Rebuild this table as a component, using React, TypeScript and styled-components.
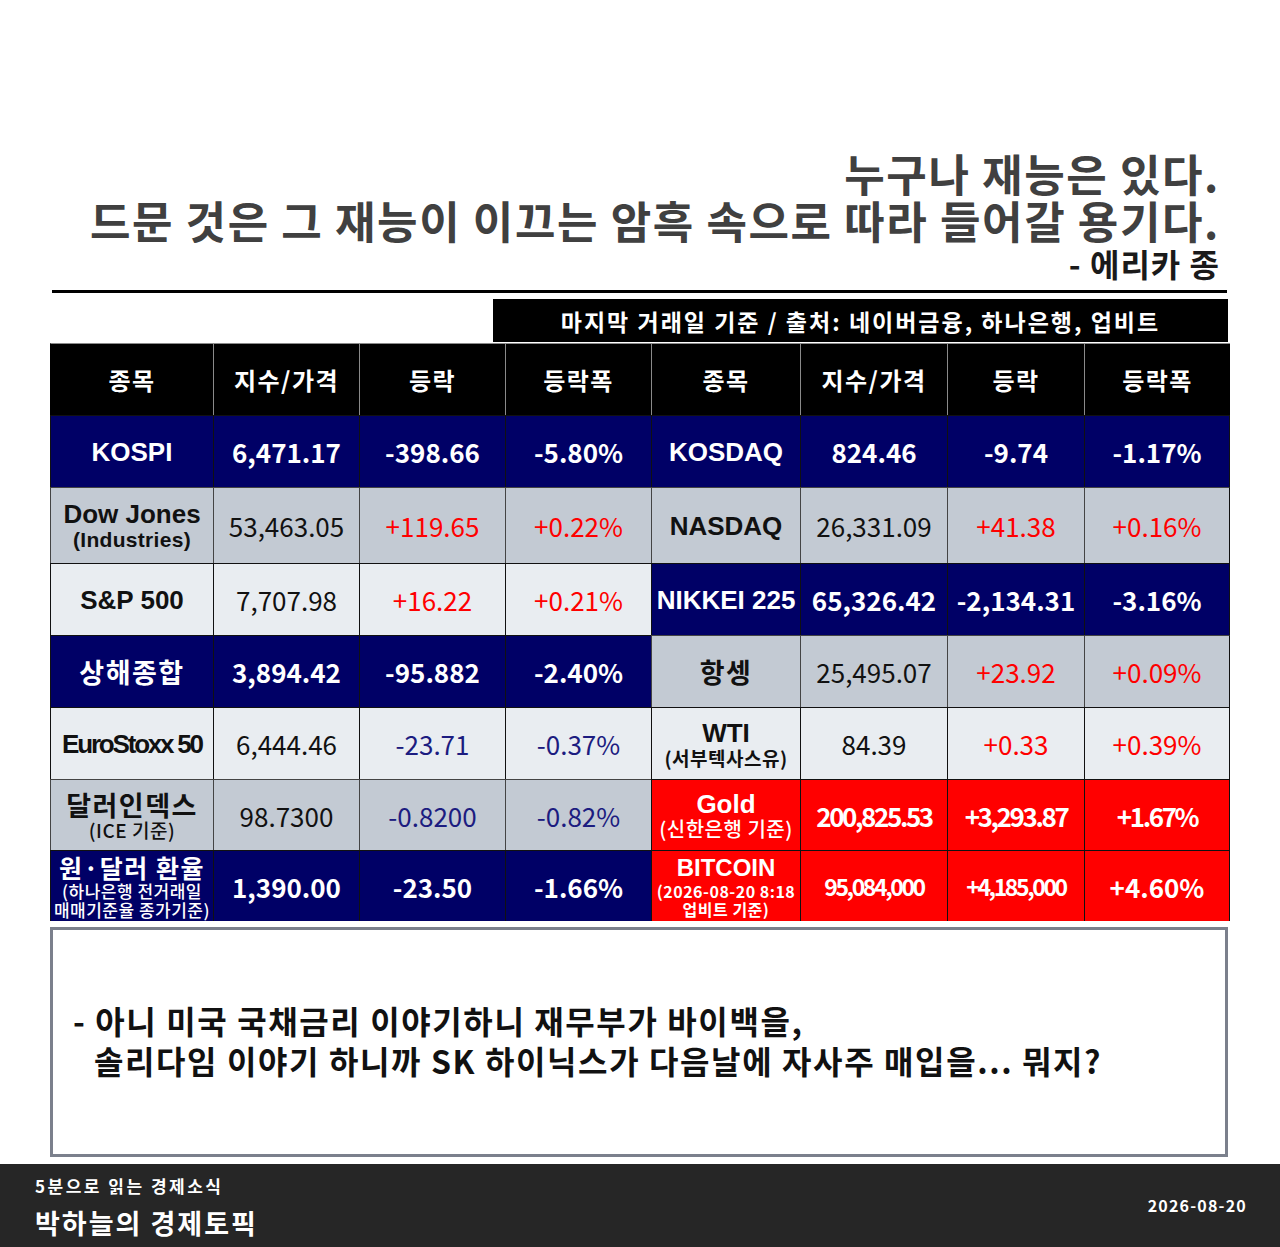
import { Fragment } from 'react';
import styled, { createGlobalStyle, css } from 'styled-components';

const GlobalStyle = createGlobalStyle`
  html, body {
    margin: 0;
    padding: 0;
    background: #ffffff;
  }
  body {
    font-family: 'Noto Sans CJK KR', 'Noto Sans', sans-serif;
  }
`;

type Tone = 'navy' | 'gray' | 'light' | 'red';
type Ink = 'white' | 'black' | 'red' | 'blue';

interface Market {
  name: string;
  latin?: boolean;
  nameSize?: number;
  sub?: string[];
  subBold?: boolean;
  subLatin?: boolean;
  subSize?: number;
  value: string;
  change: string;
  pct: string;
  tone: Tone;
  ink: Ink;
  narrow?: boolean;
  small?: boolean;
  nameTight?: boolean;
}

const rows: [Market, Market][] = [
  [
    { name: 'KOSPI', latin: true, value: '6,471.17', change: '-398.66', pct: '-5.80%', tone: 'navy', ink: 'white' },
    { name: 'KOSDAQ', latin: true, value: '824.46', change: '-9.74', pct: '-1.17%', tone: 'navy', ink: 'white' },
  ],
  [
    { name: 'Dow Jones', latin: true, sub: ['(Industries)'], subBold: true, subLatin: true, subSize: 21, value: '53,463.05', change: '+119.65', pct: '+0.22%', tone: 'gray', ink: 'red' },
    { name: 'NASDAQ', latin: true, value: '26,331.09', change: '+41.38', pct: '+0.16%', tone: 'gray', ink: 'red' },
  ],
  [
    { name: 'S&P 500', latin: true, value: '7,707.98', change: '+16.22', pct: '+0.21%', tone: 'light', ink: 'red' },
    { name: 'NIKKEI 225', latin: true, value: '65,326.42', change: '-2,134.31', pct: '-3.16%', tone: 'navy', ink: 'white' },
  ],
  [
    { name: '상해종합', value: '3,894.42', change: '-95.882', pct: '-2.40%', tone: 'navy', ink: 'white' },
    { name: '항셍', value: '25,495.07', change: '+23.92', pct: '+0.09%', tone: 'gray', ink: 'red' },
  ],
  [
    { name: 'EuroStoxx 50', latin: true, nameTight: true, value: '6,444.46', change: '-23.71', pct: '-0.37%', tone: 'light', ink: 'blue' },
    { name: 'WTI', latin: true, sub: ['(서부텍사스유)'], subBold: true, subSize: 19, value: '84.39', change: '+0.33', pct: '+0.39%', tone: 'light', ink: 'red' },
  ],
  [
    { name: '달러인덱스', sub: ['(ICE 기준)'], subSize: 19, value: '98.7300', change: '-0.8200', pct: '-0.82%', tone: 'gray', ink: 'blue' },
    { name: 'Gold', latin: true, sub: ['(신한은행 기준)'], subSize: 20, value: '200,825.53', change: '+3,293.87', pct: '+1.67%', tone: 'red', ink: 'white', narrow: true },
  ],
  [
    { name: '원·달러 환율', nameSize: 25, sub: ['(하나은행 전거래일', '매매기준율 종가기준)'], subSize: 17, value: '1,390.00', change: '-23.50', pct: '-1.66%', tone: 'navy', ink: 'white' },
    { name: 'BITCOIN', latin: true, nameSize: 24, sub: ['(2026-08-20 8:18', '업비트 기준)'], subBold: true, subSize: 16, value: '95,084,000', change: '+4,185,000', pct: '+4.60%', tone: 'red', ink: 'white', narrow: true, small: true },
  ],
];

const heads = ['종목', '지수/가격', '등락', '등락폭', '종목', '지수/가격', '등락', '등락폭'];
const rowHeights = [72, 76, 72, 72, 72, 71, 71];

const toneBg: Record<Tone, string> = {
  navy: '#000066',
  gray: '#c3cad3',
  light: '#e9edf1',
  red: '#ff0000',
};

const inkColor: Record<Ink, string> = {
  white: '#ffffff',
  black: '#111111',
  red: '#ff0000',
  blue: '#1c1c80',
};

const Page = styled.div`
  width: 1280px;
  height: 1247px;
  display: flex;
  flex-direction: column;
  overflow: hidden;
`;

const Main = styled.main`
  flex: 1;
  display: flex;
  flex-direction: column;
  padding: 150px 50px 0 50px;
`;

const Quote = styled.section`
  display: flex;
  flex-direction: column;
  align-items: flex-end;
  padding-right: 10px;
  color: #404040;
  font-weight: 700;

  .line {
    font-size: 44px;
    line-height: 47px;
    letter-spacing: 1.6px;
    white-space: nowrap;
  }

  .author {
    font-size: 32px;
    line-height: 42px;
    letter-spacing: 1px;
    color: #1a1a1a;
    margin-top: -2px;
  }
`;

const Rule = styled.hr`
  width: 1175px;
  margin: 6px 0 0 2px;
  border: none;
  border-top: 3px solid #000;
`;

const SourceBar = styled.div`
  align-self: flex-end;
  width: 735px;
  height: 43px;
  margin: 6px 2px 1px 0;
  background: #000;
  color: #fff;
  display: flex;
  align-items: center;
  justify-content: center;
  font-size: 23px;
  font-weight: 700;
  letter-spacing: 2px;
`;

const Grid = styled.div<{ $rows: string }>`
  display: grid;
  grid-template-columns: 163px 146px 146px 146px 149px 147px 137px 146px;
  grid-template-rows: 72px ${(p) => p.$rows};
  width: 1180px;
`;

const HeadCell = styled.div<{ $first?: boolean }>`
  background: #000;
  color: #fff;
  display: flex;
  align-items: center;
  justify-content: center;
  font-size: 24px;
  font-weight: 700;
  letter-spacing: 1.5px;
  border-left: 1px solid ${(p) => (p.$first ? '#000' : '#8a8a8a')};
  border-top: 1px solid #8a8a8a;
`;

const Cell = styled.div<{ $tone: Tone; $last?: boolean }>`
  background: ${(p) => toneBg[p.$tone]};
  display: flex;
  flex-direction: column;
  align-items: center;
  justify-content: center;
  border-left: 1.5px solid ${(p) => (p.$tone === 'gray' ? '#444' : '#111')};
  border-top: 1.5px solid ${(p) => (p.$tone === 'gray' ? '#444' : '#111')};
  ${(p) =>
    p.$last &&
    css`
      border-right: 1.5px solid #111;
    `}
  overflow: hidden;
  box-sizing: border-box;
`;

const Name = styled.div<{ $latin?: boolean; $dark: boolean; $tight?: boolean; $hasSub: boolean; $size?: number }>`
  font-family: ${(p) =>
    p.$latin ? "'Liberation Sans', Arial, sans-serif" : "'Noto Sans CJK KR', sans-serif"};
  font-weight: 700;
  font-size: ${(p) => (p.$size ? `${p.$size}px` : p.$latin ? '26px' : '27px')};
  line-height: ${(p) => (p.$hasSub ? '28px' : '32px')};
  letter-spacing: ${(p) => (p.$latin ? '0' : '1.5px')};
  color: ${(p) => (p.$dark ? '#111' : '#fff')};
  white-space: nowrap;
  ${(p) =>
    p.$tight &&
    css`
      letter-spacing: -2.2px;
    `}
`;

const Sub = styled.div<{ $bold?: boolean; $size: number; $dark: boolean; $latin?: boolean }>`
  font-family: ${(p) =>
    p.$latin ? "'Liberation Sans', Arial, sans-serif" : "'Noto Sans CJK KR', sans-serif"};
  font-weight: ${(p) => (p.$bold ? 700 : 500)};
  font-size: ${(p) => p.$size}px;
  line-height: ${(p) => p.$size + 2}px;
  color: ${(p) => (p.$dark ? '#111' : '#fff')};
  white-space: nowrap;
  letter-spacing: ${(p) => (p.$latin ? '0.3px' : '0.5px')};
`;

const Value = styled.div<{ $ink: Ink; $bold: boolean; $narrow?: boolean; $small?: boolean }>`
  font-family: 'Noto Sans CJK KR', 'Noto Sans', sans-serif;
  font-size: ${(p) => (p.$small ? '23px' : '26px')};
  font-weight: ${(p) => (p.$bold ? 700 : 400)};
  color: ${(p) => inkColor[p.$ink]};
  white-space: nowrap;
  ${(p) =>
    p.$narrow &&
    css`
      letter-spacing: -2.4px;
    `}
`;

const Memo = styled.section`
  margin: 6px 0 0 0;
  width: 1178px;
  height: 230px;
  box-sizing: border-box;
  border: 3px solid #7b808c;
  display: flex;
  flex-direction: column;
  justify-content: center;
  padding: 0 0 4px 20px;
  font-size: 32px;
  font-weight: 700;
  line-height: 40px;
  letter-spacing: 1.6px;
  color: #111;
`;

const MemoLine = styled.p<{ $indent?: boolean }>`
  margin: 0;
  white-space: nowrap;
  padding-left: ${(p) => (p.$indent ? '21px' : '0')};
`;

const Footer = styled.footer`
  height: 83px;
  background: #262626;
  color: #fff;
  display: flex;
  justify-content: space-between;
  align-items: center;
  padding: 0 33px 0 35px;

  .brand {
    display: flex;
    flex-direction: column;
    gap: 9px;
    margin-top: 4px;
  }
  .tagline {
    font-size: 17px;
    font-weight: 700;
    line-height: 22px;
    letter-spacing: 2.5px;
  }
  .title {
    font-size: 27px;
    font-weight: 700;
    line-height: 34px;
    letter-spacing: 2px;
  }
  .date {
    font-size: 16px;
    font-weight: 700;
    letter-spacing: 1.2px;
    margin-top: -2px;
  }
`;

const MarketCells = ({ m, right }: { m: Market; right: boolean }) => {
  const dark = m.tone === 'gray' || m.tone === 'light';
  const bold = m.tone === 'navy' || m.tone === 'red';
  const valueInk: Ink = bold ? 'white' : 'black';
  return (
    <>
      <Cell $tone={m.tone}>
        <Name $latin={m.latin} $dark={dark} $tight={m.nameTight} $hasSub={!!m.sub} $size={m.nameSize}>
          {m.name}
        </Name>
        {m.sub?.map((s) => (
          <Sub key={s} $bold={m.subBold} $size={m.subSize ?? 18} $dark={dark} $latin={m.subLatin}>
            {s}
          </Sub>
        ))}
      </Cell>
      <Cell $tone={m.tone}>
        <Value $ink={valueInk} $bold={bold} $narrow={m.narrow} $small={m.small}>
          {m.value}
        </Value>
      </Cell>
      <Cell $tone={m.tone}>
        <Value $ink={m.ink} $bold={bold} $narrow={m.narrow} $small={m.small}>
          {m.change}
        </Value>
      </Cell>
      <Cell $tone={m.tone} $last={right}>
        <Value $ink={m.ink} $bold={bold} $narrow={m.narrow && !m.small}>
          {m.pct}
        </Value>
      </Cell>
    </>
  );
};

const App = () => {
  return (
    <Page>
      <GlobalStyle />
      <Main>
        <Quote>
          <span className="line">누구나 재능은 있다.</span>
          <span className="line">드문 것은 그 재능이 이끄는 암흑 속으로 따라 들어갈 용기다.</span>
          <span className="author">- 에리카 종</span>
        </Quote>
        <Rule />
        <SourceBar>마지막 거래일 기준 / 출처: 네이버금융, 하나은행, 업비트</SourceBar>
        <Grid $rows={rowHeights.map((h) => `${h}px`).join(' ')}>
          {heads.map((h, i) => (
            <HeadCell key={i} $first={i === 0}>
              {h}
            </HeadCell>
          ))}
          {rows.map(([l, r]) => (
            <Fragment key={l.name}>
              <MarketCells m={l} right={false} />
              <MarketCells m={r} right />
            </Fragment>
          ))}
        </Grid>
        <Memo>
          <MemoLine>- 아니 미국 국채금리 이야기하니 재무부가 바이백을,</MemoLine>
          <MemoLine $indent>솔리다임 이야기 하니까 SK 하이닉스가 다음날에 자사주 매입을... 뭐지?</MemoLine>
        </Memo>
      </Main>
      <Footer>
        <div className="brand">
          <span className="tagline">5분으로 읽는 경제소식</span>
          <span className="title">박하늘의 경제토픽</span>
        </div>
        <span className="date">2026-08-20</span>
      </Footer>
    </Page>
  );
};

export default App;
